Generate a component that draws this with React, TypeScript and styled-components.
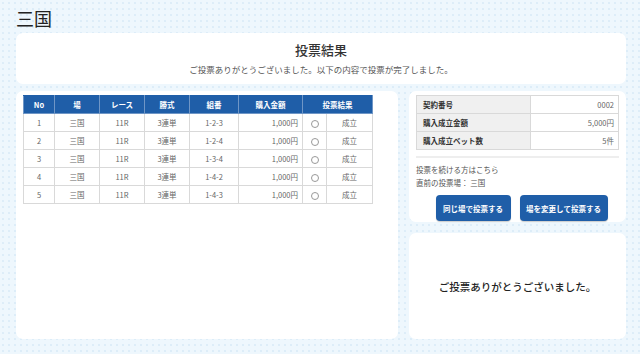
import styled, { createGlobalStyle } from "styled-components";

const GlobalStyle = createGlobalStyle`
  html, body {
    margin: 0;
    padding: 0;
  }
  body {
    font-family: "Noto Sans CJK JP", "Noto Sans", sans-serif;
    background-color: #eef7fd;
    background-image: radial-gradient(#dcedf8 0.7px, transparent 0.8px);
    background-size: 6px 6px;
    color: #333;
  }
`;

const Page = styled.div`
  width: 640px;
  height: 354px;
  box-sizing: border-box;
  padding: 4px 14px 0 16px;
`;

const Venue = styled.h1`
  margin: 0;
  font-size: 18px;
  line-height: 28px;
  font-weight: 400;
  color: #222;
`;

const Card = styled.section`
  background: #fff;
  border-radius: 7px;
  box-sizing: border-box;
`;

const Header = styled(Card)`
  height: 51px;
  margin-top: 1px;
  text-align: center;
  padding-top: 7px;
`;

const HeadTitle = styled.h2`
  margin: 0;
  font-size: 13px;
  line-height: 20px;
  font-weight: 500;
  color: #333;
`;

const HeadSub = styled.p`
  margin: 3px 0 0;
  font-size: 8.5px;
  line-height: 12px;
  color: #555;
`;

const Body = styled.div`
  display: grid;
  grid-template-columns: 382px 217px;
  grid-template-rows: 131px 106px;
  column-gap: 11px;
  row-gap: 11px;
  margin-top: 7px;
`;

const ResultCard = styled(Card)`
  grid-row: 1 / span 2;
  padding: 4px 7px;
`;

const SummaryCard = styled(Card)`
  padding: 4px 7px 0;
`;

const ThanksCard = styled(Card)`
  display: flex;
  align-items: center;
  justify-content: center;
  font-size: 10.5px;
  font-weight: 500;
  color: #222;
`;

const Table = styled.table`
  width: 349px;
  border-collapse: collapse;
  table-layout: fixed;
  font-size: 7.5px;
`;

const Th = styled.th`
  height: 17px;
  padding: 0;
  background: #1f5ea8;
  color: #fff;
  font-weight: 700;
  border: 1px solid #6f96c6;
  border-top-color: #1f5ea8;
`;

const Td = styled.td<{ $align?: string }>`
  height: 17px;
  padding: 0 4px;
  line-height: 17px;
  color: #666;
  text-align: ${({ $align }) => $align ?? "center"};
  border: 1px solid #d9d9d9;
`;

const Circle = styled.span`
  display: inline-block;
  width: 6px;
  height: 6px;
  border: 0.8px solid #999;
  border-radius: 50%;
  vertical-align: middle;
`;

const InfoTable = styled.table`
  width: 203px;
  border-collapse: collapse;
  table-layout: fixed;
  font-size: 7.5px;
`;

const InfoLabel = styled.th`
  width: 101px;
  height: 17px;
  padding: 0 6px;
  text-align: left;
  font-weight: 700;
  color: #333;
  background: #f0f0f0;
  border: 1px solid #d9d9d9;
`;

const InfoValue = styled.td`
  padding: 0 4px;
  text-align: right;
  color: #666;
  border: 1px solid #d9d9d9;
`;

const Divider = styled.hr`
  margin: 6px 0 0;
  border: 0;
  border-top: 2px solid #eeeeee;
`;

const Note = styled.p`
  margin: 0;
  font-size: 7.5px;
  line-height: 13px;
  color: #555;
  &:first-of-type {
    margin-top: 5px;
  }
`;

const Actions = styled.div`
  display: flex;
  justify-content: center;
  gap: 9px;
  margin-top: 6px;
  padding-left: 8px;
`;

const Button = styled.button<{ $w: number }>`
  width: ${({ $w }) => $w}px;
  height: 26px;
  border: 0;
  border-radius: 4px;
  background: #1f5ea8;
  color: #fff;
  font-family: inherit;
  font-size: 7.5px;
  font-weight: 700;
  box-shadow: 0 1px 1px rgba(0, 0, 0, 0.2);
`;

const columns = [31, 45, 45, 45, 49, 64, 24, 46];
const bets = ["1-2-3", "1-2-4", "1-3-4", "1-4-2", "1-4-3"];

export default function App() {
  return (
    <>
      <GlobalStyle />
      <Page>
        <Venue>三国</Venue>
        <Header>
          <HeadTitle>投票結果</HeadTitle>
          <HeadSub>ご投票ありがとうございました。以下の内容で投票が完了しました。</HeadSub>
        </Header>
        <Body>
          <ResultCard>
            <Table>
              <colgroup>
                {columns.map((w, i) => (
                  <col key={i} width={w} />
                ))}
              </colgroup>
              <thead>
                <tr>
                  <Th>No</Th>
                  <Th>場</Th>
                  <Th>レース</Th>
                  <Th>勝式</Th>
                  <Th>組番</Th>
                  <Th>購入金額</Th>
                  <Th colSpan={2}>投票結果</Th>
                </tr>
              </thead>
              <tbody>
                {bets.map((combo, i) => (
                  <tr key={combo}>
                    <Td>{i + 1}</Td>
                    <Td>三国</Td>
                    <Td>11R</Td>
                    <Td>3連単</Td>
                    <Td>{combo}</Td>
                    <Td $align="right">1,000円</Td>
                    <Td>
                      <Circle />
                    </Td>
                    <Td>成立</Td>
                  </tr>
                ))}
              </tbody>
            </Table>
          </ResultCard>
          <SummaryCard>
            <InfoTable>
              <tbody>
                <tr>
                  <InfoLabel>契約番号</InfoLabel>
                  <InfoValue>0002</InfoValue>
                </tr>
                <tr>
                  <InfoLabel>購入成立金額</InfoLabel>
                  <InfoValue>5,000円</InfoValue>
                </tr>
                <tr>
                  <InfoLabel>購入成立ベット数</InfoLabel>
                  <InfoValue>5件</InfoValue>
                </tr>
              </tbody>
            </InfoTable>
            <Divider />
            <Note>投票を続ける方はこちら</Note>
            <Note>直前の投票場： 三国</Note>
            <Actions>
              <Button $w={75}>同じ場で投票する</Button>
              <Button $w={88}>場を変更して投票する</Button>
            </Actions>
          </SummaryCard>
          <ThanksCard>ご投票ありがとうございました。</ThanksCard>
        </Body>
      </Page>
    </>
  );
}
